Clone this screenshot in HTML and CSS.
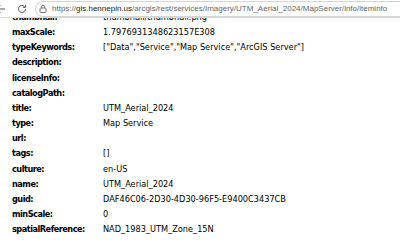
FILE: index.html
```html
<!DOCTYPE html>
<html>
<head>
<meta charset="utf-8">
<link rel="stylesheet" href="styles.css">
</head>
<body>
<div class="bar">
  <span class="nav back">
    <svg width="10" height="10" viewBox="0 0 10 10"><path d="M9 5H1M4.5 1.5L1 5l3.5 3.5" fill="none" stroke="#555" stroke-width="1"/></svg>
  </span>
  <span class="nav reload">
    <svg width="10" height="10" viewBox="0 0 10 10"><path d="M8.5 5A3.5 3.5 0 1 1 7.5 2.5" fill="none" stroke="#555" stroke-width="1"/><path d="M8.6 0.8v2.6H6" fill="none" stroke="#555" stroke-width="1"/></svg>
  </span>
  <div class="url">
    <span class="lock">
      <svg width="8" height="9" viewBox="0 0 8 9"><rect x="1" y="4" width="6" height="4.5" rx="0.8" fill="none" stroke="#666" stroke-width="0.9"/><path d="M2.5 4V2.6a1.5 1.5 0 0 1 3 0V4" fill="none" stroke="#666" stroke-width="0.9"/></svg>
    </span>
    <span class="txt"><span class="dim">https://</span>gis.hennepin.us<span class="dim">/arcgis/rest/services/Imagery/UTM_Aerial_2024/MapServer/info/iteminfo</span></span>
  </div>
</div>
<div class="info">
  <div class="k">thumbnail:</div><div class="v">thumbnail/thumbnail.png</div>
  <div class="k">maxScale:</div><div class="v">1.7976931348623157E308</div>
  <div class="k">typeKeywords:</div><div class="v">["Data","Service","Map Service","ArcGIS Server"]</div>
  <div class="k">description:</div><div class="v"></div>
  <div class="k">licenseInfo:</div><div class="v"></div>
  <div class="k">catalogPath:</div><div class="v"></div>
  <div class="k">title:</div><div class="v">UTM_Aerial_2024</div>
  <div class="k">type:</div><div class="v">Map Service</div>
  <div class="k">url:</div><div class="v"></div>
  <div class="k">tags:</div><div class="v">[]</div>
  <div class="k">culture:</div><div class="v">en-US</div>
  <div class="k">name:</div><div class="v">UTM_Aerial_2024</div>
  <div class="k">guid:</div><div class="v">DAF46C06-2D30-4D30-96F5-E9400C3437CB</div>
  <div class="k">minScale:</div><div class="v">0</div>
  <div class="k">spatialReference:</div><div class="v">NAD_1983_UTM_Zone_15N</div>
</div>
</body>
</html>
```
FILE: styles.css
```css
html, body {
  margin: 0;
  padding: 0;
  background: #fff;
  overflow: hidden;
}
.bar {
  position: fixed;
  top: 0;
  left: 0;
  right: 0;
  height: 17px;
  background: #fff;
  border-bottom: 1px solid #d8d8d8;
  display: flex;
  align-items: center;
  z-index: 2;
}
.nav {
  display: flex;
  align-items: center;
  justify-content: center;
  width: 10px;
  height: 10px;
  flex: none;
}
.back { margin-left: -4px; }
.reload { margin-left: 11px; }
.url {
  margin-left: 8px;
  height: 14px;
  flex: 1;
  min-width: 0;
  border: 1px solid #d6d6d6;
  border-right: none;
  border-radius: 8px 0 0 8px;
  display: flex;
  align-items: center;
  padding-left: 3px;
  overflow: hidden;
  white-space: nowrap;
}
.lock {
  display: flex;
  flex: none;
  width: 8px;
  height: 9px;
}
.txt {
  margin-left: 5px;
  font-family: "Liberation Sans", Arial, sans-serif;
  font-size: 8px;
  color: #222;
}
.dim { color: #666; }
.info {
  display: grid;
  grid-template-columns: 91px auto;
  padding: 10px 0 0 12px;
  font-family: "DejaVu Sans", Verdana, sans-serif;
  font-size: 8.2px;
  line-height: 15.15px;
  color: #000;
  white-space: nowrap;
}
.k {
  font-weight: bold;
  letter-spacing: -0.5px;
}
.v { min-height: 15.15px; }
```
